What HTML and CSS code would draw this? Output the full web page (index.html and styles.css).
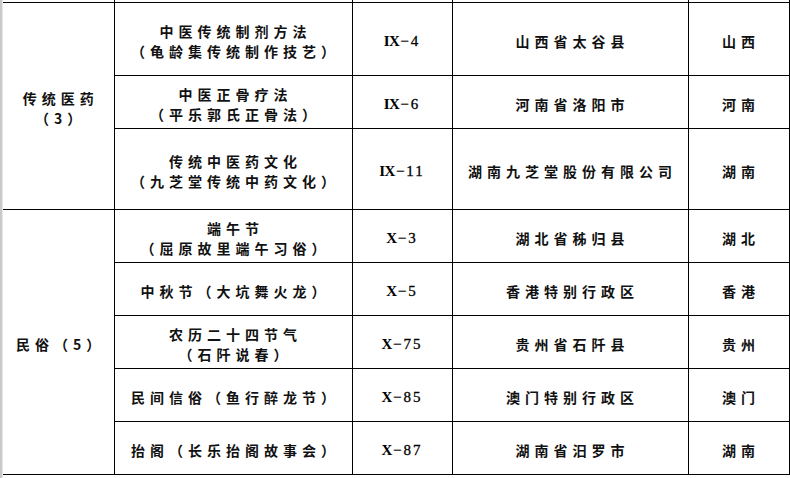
FILE: index.html
```html
<!DOCTYPE html>
<html lang="zh-CN">
<head>
<meta charset="utf-8">
<title>非遗名录</title>
<link rel="stylesheet" href="styles.css">
</head>
<body>
<div class="strip"></div>
<table class="sheet">
<colgroup>
<col class="c1"><col class="c2"><col class="c3"><col class="c4"><col class="c5">
</colgroup>
<tbody>
<tr class="r-top"><td class="first"></td><td></td><td></td><td></td><td></td></tr>
<tr class="r-73">
<td class="first" rowspan="3">传统医药<br>（3）</td>
<td>中医传统制剂方法<br>（龟龄集传统制作技艺）</td>
<td class="code"><span class="rn">IX</span><span class="num">−4</span></td>
<td>山西省太谷县</td>
<td>山西</td>
</tr>
<tr class="r-53">
<td>中医正骨疗法<br>（平乐郭氏正骨法）</td>
<td class="code"><span class="rn">IX</span><span class="num">−6</span></td>
<td>河南省洛阳市</td>
<td>河南</td>
</tr>
<tr class="r-81">
<td>传统中医药文化<br>（九芝堂传统中药文化）</td>
<td class="code"><span class="rn">IX</span><span class="num">−11</span></td>
<td>湖南九芝堂股份有限公司</td>
<td>湖南</td>
</tr>
<tr class="r-53">
<td class="first" rowspan="5">民俗（5）</td>
<td>端午节<br>（屈原故里端午习俗）</td>
<td class="code"><span class="rn">X</span><span class="num">−3</span></td>
<td>湖北省秭归县</td>
<td>湖北</td>
</tr>
<tr class="r-53">
<td>中秋节（大坑舞火龙）</td>
<td class="code"><span class="rn">X</span><span class="num">−5</span></td>
<td>香港特别行政区</td>
<td>香港</td>
</tr>
<tr class="r-53">
<td>农历二十四节气<br>（石阡说春）</td>
<td class="code"><span class="rn">X</span><span class="num">−75</span></td>
<td>贵州省石阡县</td>
<td>贵州</td>
</tr>
<tr class="r-53">
<td>民间信俗（鱼行醉龙节）</td>
<td class="code"><span class="rn">X</span><span class="num">−85</span></td>
<td>澳门特别行政区</td>
<td>澳门</td>
</tr>
<tr class="r-53">
<td>抬阁（长乐抬阁故事会）</td>
<td class="code"><span class="rn">X</span><span class="num">−87</span></td>
<td>湖南省汨罗市</td>
<td>湖南</td>
</tr>
</tbody>
</table>
</body>
</html>
```

FILE: styles.css
```css
html, body {
  margin: 0;
  padding: 0;
  height: 100%;
  background: #ffffff;
}

body {
  display: flex;
  align-items: flex-start;
  overflow: hidden;
}

.strip {
  width: 2px;
  height: 478px;
  background: #c9c9c9;
  border-right: 1px solid #e8e8e8;
  flex: none;
}

.sheet {
  border-collapse: collapse;
  table-layout: fixed;
  width: 786px;
  margin-top: -1px;
  font-family: "Noto Sans CJK SC", "Noto Sans", sans-serif;
  font-weight: 700;
  font-size: 14px;
  color: #111111;
}

.c1 { width: 111px; }
.c2 { width: 238px; }
.c3 { width: 100px; }
.c4 { width: 236px; }
.c5 { width: 101px; }

.sheet td {
  border: 1px solid #000000;
  padding: 4px 0 0 5px;
  text-align: center;
  vertical-align: middle;
  line-height: 20px;
  letter-spacing: 5px;
  white-space: nowrap;
  box-sizing: border-box;
}

.sheet td.first {
  border-left: none;
}

.r-top td {
  border-top: none;
  height: 3px;
  padding: 0;
  line-height: 0;
}

.r-73 td { height: 73px; }
.r-53 td { height: 53px; }
.r-81 td { height: 81px; }

.sheet td.code {
  font-family: "Liberation Serif", "Times New Roman", serif;
  font-size: 15px;
  letter-spacing: 0;
  padding-left: 0;
  color: #000000;
}

.rn {
  font-weight: 700;
  letter-spacing: -0.5px;
  margin-right: 1px;
}

.num {
  font-weight: 400;
  letter-spacing: 2px;
  -webkit-text-stroke: 0.3px #000000;
}
```
